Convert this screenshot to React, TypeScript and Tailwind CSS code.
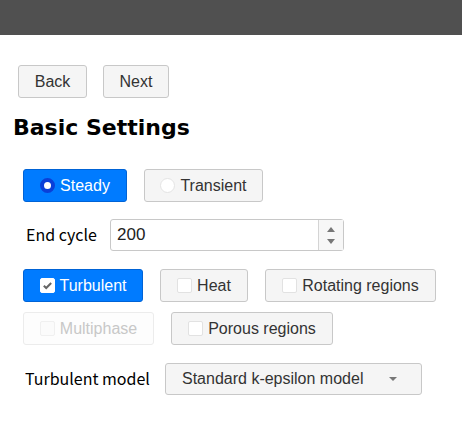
import type { ReactNode } from "react";

const font = { fontFamily: '"Liberation Sans", Arial, sans-serif' };
const labelFont = { fontFamily: '"Noto Sans CJK JP", "Noto Sans", sans-serif' };

function Radio({ on }: { on: boolean }) {
  return on ? (
    <span className="inline-block size-[15px] shrink-0 rounded-full border-[4px] border-[#0a3fd8] bg-white" />
  ) : (
    <span className="inline-block size-[15px] shrink-0 rounded-full border border-[#e4e4e4] bg-white" />
  );
}

function Check({ on, faded }: { on: boolean; faded?: boolean }) {
  return (
    <span
      className={`flex size-[15px] shrink-0 items-center justify-center rounded-[2px] border ${
        faded ? "border-[#f0f0f0] bg-[#fbfbfb]" : on ? "border-white bg-white" : "border-[#e2e2e2] bg-white"
      }`}
    >
      {on ? (
        <svg viewBox="0 0 12 12" className="size-[11px]">
          <path d="M2 6.2 4.6 8.8 10 3.2" fill="none" stroke="#666" strokeWidth="2.2" />
        </svg>
      ) : null}
    </span>
  );
}

function Toggle({
  active,
  disabled,
  icon,
  children,
  className = "",
}: {
  active?: boolean;
  disabled?: boolean;
  icon: ReactNode;
  children: ReactNode;
  className?: string;
}) {
  const look = active
    ? "border-[#0063d6] bg-[#007bff] text-white"
    : disabled
      ? "border-[#ececec] bg-[#fdfdfd] text-[#c8c8c8]"
      : "border-[#c8c8c8] bg-[#f5f5f5] text-[#333]";
  return (
    <div
      className={`flex h-[33px] items-center justify-center gap-[5px] rounded-[3px] border text-[16px] ${look} ${className}`}
    >
      {icon}
      <span>{children}</span>
    </div>
  );
}

export default function App() {
  return (
    <div className="min-h-[435px] bg-white text-[16px]" style={font}>
      <div className="h-[35px] bg-[#505050]" />

      <div className="flex gap-[16px] pl-[18px] pt-[30px]">
        <button className="h-[33px] w-[69px] rounded-[3px] border border-[#c8c8c8] bg-[#f5f5f5] text-[#333]">
          Back
        </button>
        <button className="h-[33px] w-[66px] rounded-[3px] border border-[#c8c8c8] bg-[#f5f5f5] text-[#333]">
          Next
        </button>
      </div>

      <h1
        className="mt-[14px] pl-[13px] text-[22px] font-bold leading-[32px] text-black"
        style={{ fontFamily: '"DejaVu Sans", "Noto Sans", sans-serif' }}
      >
        Basic Settings
      </h1>

      <div className="pl-[23px]">
        <div className="mt-[25px] flex gap-[17px]">
          <Toggle active icon={<Radio on />} className="w-[104px]">
            Steady
          </Toggle>
          <Toggle icon={<Radio on={false} />} className="w-[119px]">
            Transient
          </Toggle>
        </div>

        <div className="mt-[17px] flex h-[32px] items-center">
          <span className="ml-[3px] w-[84px] pb-[3px] text-[16px] text-black" style={labelFont}>
            End cycle
          </span>
          <div className="flex h-[32px] w-[234px] rounded-[3px] border border-[#c8c8c8] bg-white">
            <span className="flex flex-1 items-center pl-[6px] text-[17px] text-[#222]">200</span>
            <div className="flex w-[25px] flex-col items-center justify-center gap-[7px] border-l border-[#d4d4d4] bg-[#f7f7f7]">
              <svg viewBox="0 0 8 5" className="h-[5px] w-[8px]">
                <path d="M0 5 4 0 8 5Z" fill="#777" />
              </svg>
              <svg viewBox="0 0 8 5" className="h-[5px] w-[8px]">
                <path d="M0 0 4 5 8 0Z" fill="#777" />
              </svg>
            </div>
          </div>
        </div>

        <div className="mt-[18px] flex gap-[17px]">
          <Toggle active icon={<Check on />} className="w-[120px]">
            Turbulent
          </Toggle>
          <Toggle icon={<Check on={false} />} className="w-[88px]">
            Heat
          </Toggle>
          <Toggle icon={<Check on={false} />} className="w-[171px]">
            Rotating regions
          </Toggle>
        </div>

        <div className="mt-[10px] flex gap-[17px]">
          <Toggle disabled icon={<Check on={false} faded />} className="w-[131px]">
            Multiphase
          </Toggle>
          <Toggle icon={<Check on={false} />} className="w-[162px]">
            Porous regions
          </Toggle>
        </div>

        <div className="mt-[18px] flex h-[32px] items-center">
          <span className="ml-[2px] w-[140px] pb-[3px] text-[16px] text-black" style={labelFont}>
            Turbulent model
          </span>
          <div className="flex h-[32px] w-[257px] items-center justify-between rounded-[3px] border border-[#c8c8c8] bg-[#f5f5f5] pl-[16px] pr-[24px] text-[#333]">
            <span>Standard k-epsilon model</span>
            <svg viewBox="0 0 8 4" className="h-[4px] w-[8px]">
              <path d="M0 0 4 4 8 0Z" fill="#777" />
            </svg>
          </div>
        </div>
      </div>
    </div>
  );
}
